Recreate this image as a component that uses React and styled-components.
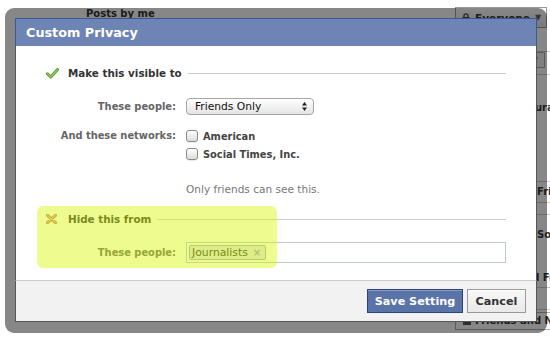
import React from 'react';
import styled, { createGlobalStyle } from 'styled-components';

const GlobalStyle = createGlobalStyle`
  html, body {
    margin: 0;
    padding: 0;
    background: #fff;
  }
  body {
    font-family: "DejaVu Sans", "Liberation Sans", sans-serif;
  }
`;

const Stage = styled.div`
  position: relative;
  width: 550px;
  height: 337px;
  overflow: hidden;
  background: #fff;
`;

/* page that sits behind the dialog */
const Page = styled.div`
  display: flex;
  height: 100%;
`;

const Main = styled.div`
  width: 455px;
  flex-shrink: 0;
  box-sizing: border-box;
  padding: 7px 0 0 86px;
`;

const MainTitle = styled.div`
  font-size: 10px;
  font-weight: bold;
  line-height: 14px;
  color: #333;
`;

const Sidebar = styled.div`
  flex: 1;
  min-width: 0;
  display: flex;
  flex-direction: column;
  padding-top: 7px;
`;

const EveryoneBtn = styled.div`
  height: 21px;
  width: 92px;
  box-sizing: border-box;
  border: 1px solid #999;
  background: linear-gradient(#fff, #e8e8e8);
  display: flex;
  align-items: center;
  gap: 5px;
  padding-left: 6px;
  font-size: 10.5px;
  font-weight: bold;
  color: #333;
  white-space: nowrap;
`;

const SideRow = styled.div`
  height: ${p => p.h}px;
  flex-shrink: 0;
  box-sizing: border-box;
  border-bottom: ${p => (p.line ? '1px solid #ccc' : '0')};
  padding: ${p => p.top || 0}px 0 0 ${p => p.indent || 0}px;
  font-size: 10px;
  font-weight: bold;
  line-height: 12px;
  color: #333;
  white-space: nowrap;
  overflow: hidden;
`;

const SmallSelect = styled.div`
  height: 16px;
  width: 90px;
  box-sizing: border-box;
  border: 1px solid #aaa;
  background: #f3f3f3;
  display: flex;
  justify-content: flex-end;
  align-items: center;
  padding-right: 6px;
  font-size: 7px;
  color: #555;
`;

const NetworkBox = styled.div`
  height: 18px;
  width: 100px;
  box-sizing: border-box;
  border: 1px solid #aaa;
  display: flex;
  align-items: center;
  gap: 4px;
  padding-left: 7px;
  font-size: 10px;
  font-weight: bold;
  color: #333;
  white-space: nowrap;
`;

const NetIcon = styled.span`
  width: 8px;
  height: 7px;
  background: #555;
  flex-shrink: 0;
`;

/* dialog */
const Frame = styled.div`
  position: absolute;
  left: 5px;
  top: 8px;
  width: 542px;
  height: 325px;
  box-sizing: border-box;
  padding: 10px 10px 11px;
  border-radius: 9px;
  background: rgba(0, 0, 0, 0.47);
  display: flex;
`;

const Dialog = styled.div`
  flex: 1;
  display: flex;
  flex-direction: column;
  background: #fff;
`;

const TitleBar = styled.div`
  height: 28px;
  box-sizing: border-box;
  background: #6d84b4;
  border: 1px solid #3b5998;
  border-bottom: 0;
  padding-left: 10px;
  color: #fff;
  font-size: 12.8px;
  font-weight: bold;
  line-height: 27px;
`;

const Body = styled.div`
  position: relative;
  flex: 1;
  border-left: 1px solid #555;
  border-right: 1px solid #555;
  padding: 20px 30px 0;
`;

const SectionHeader = styled.div`
  display: flex;
  align-items: center;
  height: 14px;
  margin-top: ${p => p.gap || 0}px;
`;

const HeaderIcon = styled.span`
  width: 22px;
  display: flex;
  align-items: center;
`;

const HeaderText = styled.span`
  font-size: 10.35px;
  font-weight: bold;
  color: #333;
  white-space: nowrap;
`;

const HeaderLine = styled.span`
  flex: 1;
  height: 0;
  border-top: 1px solid #ccc;
  margin-left: 6px;
`;

const FieldRow = styled.div`
  display: grid;
  grid-template-columns: 130px 1fr;
  column-gap: 10px;
  align-items: start;
  margin-top: ${p => p.gap}px;
`;

const Label = styled.div`
  text-align: right;
  font-size: 9.9px;
  font-weight: bold;
  color: #666;
  line-height: ${p => p.lh}px;
  white-space: nowrap;
`;

const Select = styled.div`
  width: 128px;
  height: 17px;
  box-sizing: border-box;
  border: 1px solid #a5a5a5;
  border-radius: 4px;
  background: linear-gradient(#fff, #e4e4e4);
  box-shadow: inset 0 1px 0 #fff;
  display: flex;
  align-items: center;
  justify-content: space-between;
  padding: 0 6px 0 8px;
  font-size: 10.7px;
  color: #111;
`;

const CheckList = styled.div`
  display: flex;
  flex-direction: column;
`;

const CheckItem = styled.label`
  height: 18px;
  display: flex;
  align-items: center;
  gap: 5px;
  font-size: 9.85px;
  font-weight: bold;
  color: #444;
  white-space: nowrap;
`;

const Box = styled.span`
  width: 12px;
  height: 12px;
  box-sizing: border-box;
  border: 1px solid #8a8a8a;
  border-radius: 3px;
  background: linear-gradient(#fff, #dcdcdc);
  box-shadow: 0 1px 0 rgba(0, 0, 0, 0.08);
`;

const Note = styled.div`
  margin: 19px 0 0 140px;
  font-size: 10.55px;
  line-height: 14px;
  color: #777;
  white-space: nowrap;
`;

const TokenInput = styled.div`
  height: 21px;
  box-sizing: border-box;
  border: 1px solid #bdc7d8;
  display: flex;
  align-items: center;
  padding-left: 2px;
`;

const Token = styled.span`
  height: 15px;
  box-sizing: border-box;
  border: 1px solid #9dacce;
  border-radius: 2px;
  background: #e2e6f0;
  display: flex;
  align-items: center;
  gap: 5px;
  padding: 0 4px 0 2px;
  font-size: 10.8px;
  color: #333;
`;

const TokenX = styled.span`
  font-size: 10px;
  font-weight: bold;
  color: #8e9cbd;
`;

const Highlight = styled.div`
  position: absolute;
  left: 21px;
  top: 160px;
  width: 240px;
  height: 62px;
  border-radius: 6px;
  background: rgba(214, 246, 0, 0.44);
  pointer-events: none;
`;

const Footer = styled.div`
  height: 42px;
  box-sizing: border-box;
  background: #f2f2f2;
  border: 1px solid #555;
  border-top: 1px solid #ccc;
  display: flex;
  justify-content: flex-end;
  align-items: flex-start;
  gap: 4px;
  padding: 8px 10px 0 0;
`;

const Button = styled.button`
  width: ${p => p.w}px;
  height: 24px;
  box-sizing: border-box;
  padding: 0;
  font-family: "DejaVu Sans", "Liberation Sans", sans-serif;
  font-size: 11.2px;
  font-weight: bold;
  border: 1px solid ${p => (p.$primary ? '#29447e' : '#999')};
  background: ${p => (p.$primary ? '#5b74a8' : 'linear-gradient(#f8f8f8, #e9e9e9)')};
  color: ${p => (p.$primary ? '#fff' : '#333')};
  box-shadow: ${p => (p.$primary ? 'inset 0 1px 0 #8a9cc2' : 'inset 0 1px 0 #fff')};
`;

const CheckIcon = () => (
  <svg width="13" height="11" viewBox="0 0 13 11">
    <path d="M1.5 5.8 L4.8 9 L11.6 1.6" fill="none" stroke="#5b9a2a" strokeWidth="3" strokeLinecap="round" strokeLinejoin="round" />
    <path d="M1.5 5.8 L4.8 9 L11.6 1.6" fill="none" stroke="#bfe58b" strokeWidth="1" strokeLinecap="round" strokeLinejoin="round" />
  </svg>
);

const CrossIcon = () => (
  <svg width="11" height="10" viewBox="0 0 11 10">
    <path d="M1.5 1.3 L9.5 8.7 M9.5 1.3 L1.5 8.7" fill="none" stroke="#c0786a" strokeWidth="3" strokeLinecap="round" />
    <path d="M1.5 1.3 L9.5 8.7 M9.5 1.3 L1.5 8.7" fill="none" stroke="#f2d2c4" strokeWidth="0.9" strokeLinecap="round" />
  </svg>
);

const Arrows = () => (
  <svg width="5" height="9" viewBox="0 0 5 9">
    <path d="M2.5 0 L5 3.5 L0 3.5 Z M2.5 9 L5 5.5 L0 5.5 Z" fill="#222" />
  </svg>
);

const Lock = () => (
  <svg width="8" height="10" viewBox="0 0 8 10">
    <path d="M2 4 V2.8 A2 2 0 0 1 6 2.8 V4" fill="none" stroke="#444" strokeWidth="1.3" />
    <rect x="0.5" y="4" width="7" height="5.5" fill="#444" />
  </svg>
);

export default function App() {
  return (
    <Stage>
      <GlobalStyle />
      <Page>
        <Main>
          <MainTitle>Posts by me</MainTitle>
        </Main>
        <Sidebar>
          <EveryoneBtn>
            <Lock />
            Everyone
            <span style={{ fontSize: 8, color: '#666' }}>▼</span>
          </EveryoneBtn>
          <SideRow h={24} line />
          <SideRow h={23} line>
            <SmallSelect>▼</SmallSelect>
          </SideRow>
          <SideRow h={95} top={27} indent={60}>Natural</SideRow>
          <SideRow h={12} line />
          <SideRow h={21} top={4} indent={82} line>Friends</SideRow>
          <SideRow h={12} line />
          <SideRow h={45} top={14} indent={82}>Social Times</SideRow>
          <SideRow h={28} top={12} indent={42} line>Limited Friends</SideRow>
          <SideRow h={22} line />
          <SideRow h={24} top={2}>
            <NetworkBox>
              <NetIcon />
              Friends and Networks
            </NetworkBox>
          </SideRow>
        </Sidebar>
      </Page>

      <Frame>
        <Dialog>
          <TitleBar>Custom Privacy</TitleBar>
          <Body>
            <SectionHeader>
              <HeaderIcon><CheckIcon /></HeaderIcon>
              <HeaderText>Make this visible to</HeaderText>
              <HeaderLine />
            </SectionHeader>

            <FieldRow gap={18}>
              <Label lh={17}>These people:</Label>
              <Select>
                Friends Only
                <Arrows />
              </Select>
            </FieldRow>

            <FieldRow gap={12}>
              <Label lh={18}>And these networks:</Label>
              <CheckList>
                <CheckItem><Box />American</CheckItem>
                <CheckItem><Box />Social Times, Inc.</CheckItem>
              </CheckList>
            </FieldRow>

            <Note>Only friends can see this.</Note>

            <SectionHeader gap={16}>
              <HeaderIcon><CrossIcon /></HeaderIcon>
              <HeaderText>Hide this from</HeaderText>
              <HeaderLine />
            </SectionHeader>

            <FieldRow gap={16}>
              <Label lh={21}>These people:</Label>
              <TokenInput>
                <Token>
                  Journalists
                  <TokenX>×</TokenX>
                </Token>
              </TokenInput>
            </FieldRow>

            <Highlight />
          </Body>
          <Footer>
            <Button $primary w={96}>Save Setting</Button>
            <Button w={59}>Cancel</Button>
          </Footer>
        </Dialog>
      </Frame>
    </Stage>
  );
}
